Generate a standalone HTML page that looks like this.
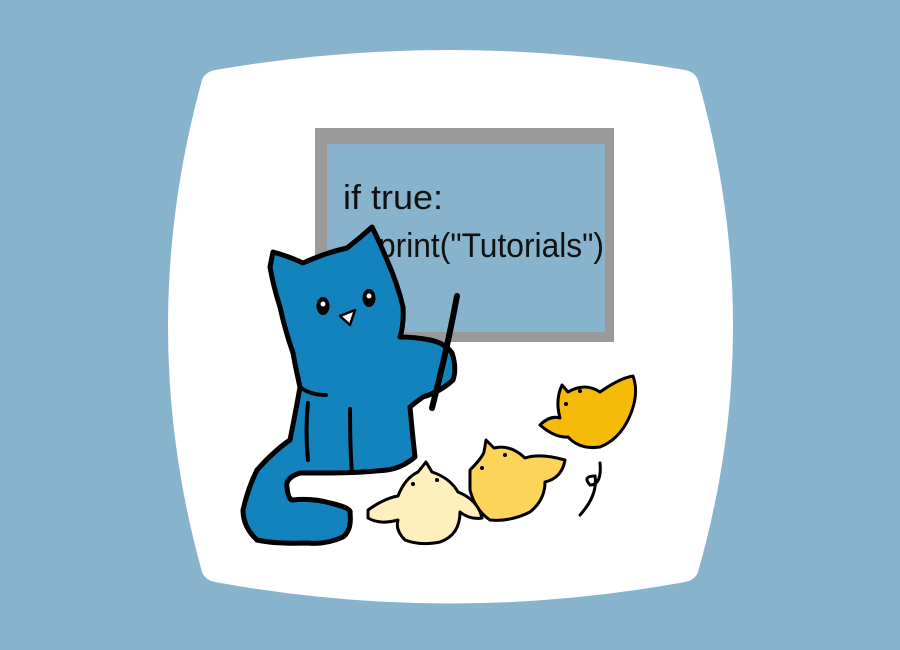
<!DOCTYPE html>
<html><head><meta charset="utf-8"><style>
html,body{margin:0;padding:0;background:#88b3cd;}
svg{display:block}
</style></head><body>
<svg width="900" height="650" viewBox="0 0 900 650" xmlns="http://www.w3.org/2000/svg">
<rect width="900" height="650" fill="#88b3cd"/>
<path d="M215 70 Q450 30 685 70 Q695 72 698 80 Q768 327 698 572 Q695 580 685 582 Q450 625 215 582 Q205 580 202 572 Q134 327 202 80 Q205 72 215 70 Z" fill="#fff"/>
<rect x="315" y="128" width="299" height="214" fill="#9a9a9a"/>
<rect x="327" y="144" width="278" height="188" fill="#88b3cc"/>
<text x="343" y="209" font-family="Liberation Sans, sans-serif" font-size="34" fill="#111" textLength="100" lengthAdjust="spacingAndGlyphs">if true:</text>
<text x="378" y="257" font-family="Liberation Sans, sans-serif" font-size="34" fill="#111" textLength="226" lengthAdjust="spacingAndGlyphs">print("Tutorials")</text>
<!-- cat -->
<path d="M273 252 Q288 256 303 263 Q325 253 347 248 Q360 238 372 227 Q380 243 387 260 Q398 285 403 307 Q404 325 400 337 Q415 337 430 340 Q445 343 452 353 Q457 368 453 380 Q440 392 423 397 Q416 402 410 407 Q412 430 415 457 Q402 468 387 470 Q360 473 330 473 L300 473 Q285 478 287 487 Q288 500 293 500 Q312 498 330 503 Q352 508 350 513 Q352 530 343 537 Q325 545 307 543 Q275 544 257 540 Q243 527 243 510 Q248 488 257 470 Q275 450 290 440 Q296 410 300 387 Q296 370 293 353 Q285 330 280 307 Q273 285 270 267 Z" fill="#1283bd" stroke="#000" stroke-width="5" stroke-linejoin="round"/>
<path d="M308 460 Q305 430 308 403 M352 472 Q350 450 350 409" fill="none" stroke="#000" stroke-width="4" stroke-linecap="round"/>
<path d="M300 387 Q310 395 326 395" fill="none" stroke="#000" stroke-width="4" stroke-linecap="round"/>
<ellipse cx="323" cy="306" rx="6.5" ry="9" fill="#000"/><circle cx="323" cy="304" r="2.5" fill="#fff"/>
<ellipse cx="369" cy="298" rx="6.5" ry="9" fill="#000"/><circle cx="369" cy="296" r="2.5" fill="#fff"/>
<path d="M340 316 L355 310 L350 325 Z" fill="#fff" stroke="#000" stroke-width="2.5" stroke-linejoin="round"/>
<path d="M457 296 Q447 350 432 408" fill="none" stroke="#000" stroke-width="6" stroke-linecap="round"/>
<!-- chicks -->
<path d="M540 425 Q550 415 560 418 Q555 400 562 385 L568 392 Q585 382 600 392 Q620 378 633 376 Q640 395 628 420 Q618 440 600 447 Q580 450 568 437 Q555 438 540 425 Z" fill="#f5bb08" stroke="#000" stroke-width="3" stroke-linejoin="round"/>
<path d="M470 470 Q482 458 484 452 L486 440 L494 448 Q510 444 525 458 Q540 453 565 460 Q562 478 545 482 Q545 500 530 512 Q510 522 490 520 Q475 510 470 490 Z" fill="#fdd45a" stroke="#000" stroke-width="3" stroke-linejoin="round"/>
<path d="M368 510 Q385 498 398 496 Q405 478 418 472 L426 462 L432 472 Q450 478 458 492 Q478 500 482 518 Q470 520 460 512 Q460 535 440 542 Q420 546 405 540 Q395 530 398 520 Q380 525 368 518 Z" fill="#fdf0bd" stroke="#000" stroke-width="3" stroke-linejoin="round"/>
<circle cx="566" cy="404" r="2" fill="#000"/><circle cx="580" cy="391" r="2" fill="#000"/>
<circle cx="482" cy="468" r="2" fill="#000"/><circle cx="505" cy="455" r="2" fill="#000"/>
<circle cx="413" cy="484" r="2" fill="#000"/><circle cx="437" cy="480" r="2" fill="#000"/>
<path d="M600 463 Q602 485 590 485 Q582 476 595 476 Q598 495 580 515" fill="none" stroke="#000" stroke-width="3" stroke-linecap="round"/>
</svg>
</body></html>
